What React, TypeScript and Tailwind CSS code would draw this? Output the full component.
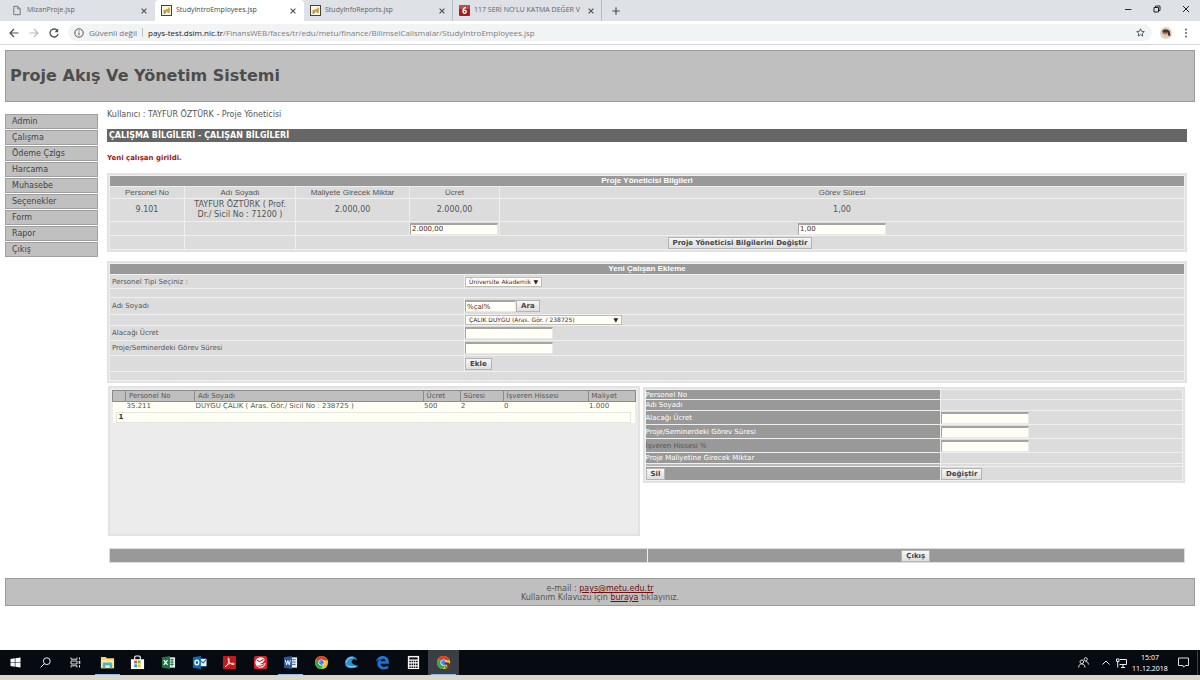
import { useState } from "react";
import type { ReactNode } from "react";

const menu = ["Admin", "Çalışma", "Ödeme Çzlgs", "Harcama", "Muhasebe", "Seçenekler", "Form", "Rapor", "Çıkış"];

const employees = [
  { no: "35.211", name: "DUYGU ÇALIK ( Aras. Gör./ Sicil No : 238725 )", fee: "500", duration: "2", share: "0", cost: "1.000" },
];

const cell = "bg-[#dcdcdc] p-0";
const field = "block h-[12px] w-[88px] border border-t-2 border-t-[#a4a4a4] border-l-[#a4a4a4] border-r-[#e8e8e8] border-b-[#e8e8e8] bg-[#fffff5] px-px text-[7px] leading-none text-[#5a2525] outline-none";
const panel = "w-full border-2 border-[#e2e2e2] bg-[#efefef] border-separate border-spacing-px";

function Btn({ children, onClick }: { children: ReactNode; onClick?: () => void }) {
  return (
    <button type="button" onClick={onClick}
      className="block h-[12px] border border-[#b4b4b4] bg-linear-to-b from-[#f6f6f6] to-[#dedede] px-1 text-[7px] leading-[10px] font-bold whitespace-nowrap text-[#444]">
      {children}
    </button>
  );
}

function Dropdown({ id, label, options, wide }: { id: string; label: string; options: string[]; wide?: boolean }) {
  return (
    <div className={wide ? "relative w-[157px]" : "relative w-[77px]"}>
      <select id={id} aria-label={label}
        className="block h-[10px] w-full appearance-none border border-[#c0bdb5] bg-[#fffff8] pl-[3px] text-[6px] leading-[8px] text-[#5a2020] outline-none">
        {options.map((o) => <option key={o}>{o}</option>)}
      </select>
      <span className="pointer-events-none absolute top-0 right-1 text-[6px] leading-[10px] text-[#401010]">▼</span>
    </div>
  );
}

/* ---- browser frame ---- */

function PageIcon() {
  return (
    <svg className="h-[11px] w-[11px]" viewBox="0 0 11 11" fill="none" stroke="#74777b">
      <path d="M1.800 1.300h4l2.400 2.400v6H1.800zM5.700 1.500v2.400h2.400" />
    </svg>
  );
}

function TomcatIcon() {
  return (
    <svg className="h-[11px] w-[11px]" viewBox="0 0 11 11">
      <rect x=".5" y=".5" width="10" height="10" fill="#fbf8e9" stroke="#44423c" />
      <path d="M2 8.500 3 5.500 5 4.200 7 3.800l.8-1.800 1.400 1.600L9 6.500 7.500 8 5.500 6.800 4 8.800z" fill="#d1a540" />
      <path d="M2.200 5.600 4.200 6.200M3.200 8.400l1.600-1M7.400 7.200l1.400 1" stroke="#7d683a" strokeWidth=".6" />
    </svg>
  );
}

function GazetteIcon() {
  return (
    <svg className="h-[11px] w-[11px]" viewBox="0 0 11 11">
      <rect width="11" height="11" rx="1" fill="#a81c20" />
      <rect width="11" height="4" rx="1" fill="#c4494b" />
      <path d="M7 2.600C5 2.400 4 4 4 6c0 1.600.6 2.400 1.600 2.400S7.200 7.600 7.200 6.600 6.600 5.200 5.700 5.200 4.200 6 4.200 6.600" fill="none" stroke="#fff" strokeWidth="1.300" />
    </svg>
  );
}

function CloseIcon() {
  return (
    <svg className="h-[6px] w-[6px]" viewBox="0 0 6 6" stroke="#4c4f53" strokeWidth="1.100">
      <path d="M.6.600 5.400 5.400M5.400.600.6 5.400" />
    </svg>
  );
}

const tabs = [
  { title: "MizanProje.jsp", icon: <PageIcon /> },
  { title: "StudyIntroEmployees.jsp", icon: <TomcatIcon /> },
  { title: "StudyInfoReports.jsp", icon: <TomcatIcon /> },
  { title: "117 SERİ NO'LU KATMA DEĞER V", icon: <GazetteIcon /> },
];

function Browser() {
  const [active, setActive] = useState(1);
  return (
    <header className="font-['Open_Sans','Noto_Sans',sans-serif] text-[8px] text-[#5f6368]">
      <div className="flex h-[21px] items-stretch bg-[#dee1e6] pl-[6px]">
        {tabs.map((t, i) => (
          <div key={t.title}
            className={`flex w-[149px] items-center border-r pr-[7px] pl-[6px] text-[7px] ${i === active ? "rounded-t-[4px] border-white bg-white text-[#45494d]" : i > active ? "border-[#b9bcc1]" : "border-transparent"}`}>
            <button type="button" onClick={() => setActive(i)} className="flex flex-1 items-center gap-1 text-left">
              <span className="shrink-0">{t.icon}</span>
              <span className="whitespace-nowrap">{t.title}</span>
            </button>
            <button type="button" aria-label="Kapat"><CloseIcon /></button>
          </div>
        ))}
        <button type="button" aria-label="Yeni sekme" className="px-[10px]">
          <svg className="h-[8px] w-[8px]" viewBox="0 0 8 8" stroke="#4c4f53" strokeWidth="1.200"><path d="M4 .3v7.400M.3 4h7.400" /></svg>
        </button>
        <div className="ml-auto flex h-[18px] items-center gap-[21px] pr-[10px]">
          <button type="button" aria-label="Küçült">
            <svg className="h-[8px] w-[8px]" viewBox="0 0 8 8" stroke="#333"><path d="M1 4.500h6.500" /></svg>
          </button>
          <button type="button" aria-label="Önceki boyut">
            <svg className="h-[8px] w-[8px]" viewBox="0 0 8 8" fill="none" stroke="#222"><path d="M1 2.500h4.500V7H1zM2.500 2.300V1H7v4.500H5.800" /></svg>
          </button>
          <button type="button" aria-label="Kapat">
            <svg className="h-[8px] w-[8px]" viewBox="0 0 8 8" stroke="#222"><path d="M1 1l6 6M7 1 1 7" /></svg>
          </button>
        </div>
      </div>
      <div className="flex h-[24px] items-center border-b border-[#d5d7da] bg-white pl-[9px]">
        <button type="button" aria-label="Geri">
          <svg className="h-[10px] w-[10px]" viewBox="0 0 10 10" fill="none" stroke="#4c4f53" strokeWidth="1.200"><path d="M9.500 5H1M5 1 1 5l4 4" /></svg>
        </button>
        <button type="button" aria-label="İleri" className="ml-[10px]">
          <svg className="h-[10px] w-[10px]" viewBox="0 0 10 10" fill="none" stroke="#b6b8bb" strokeWidth="1.100"><path d="M.5 5H9M5 1l4 4-4 4" /></svg>
        </button>
        <button type="button" aria-label="Yenile" className="ml-[10px]">
          <svg className="h-[10px] w-[10px]" viewBox="0 0 10 10" fill="none" stroke="#4c4f53" strokeWidth="1.300"><path d="M8.300 2.600A4 4 0 1 0 9 5.800" /><path d="M9.200.500v3.700H5.500z" fill="#4c4f53" stroke="none" /></svg>
        </button>
        <div className="ml-[9px] flex h-[17px] flex-1 items-center rounded-full bg-[#f1f3f4] pr-[7px] pl-[6px]">
          <svg className="h-[10px] w-[10px]" viewBox="0 0 10 10" fill="none" stroke="#55585c"><circle cx="5" cy="5" r="4.200" /><path d="M5 4.400v3M5 2.400v1.100" /></svg>
          <span className="ml-[5px] text-[#6d7175]">Güvenli değil</span>
          <span className="mx-[5px] h-[9px] w-px bg-[#bfc2c5]" />
          <span className="flex-1 text-[#7b7f83]">
            <span className="text-[#222]">pays-test.dsim.nic.tr</span>/FinansWEB/faces/tr/edu/metu/finance/BilimselCalismalar/StudyIntroEmployees.jsp
          </span>
          <svg className="h-[9px] w-[9px]" viewBox="0 0 10 10" fill="none" stroke="#4c4f53"><path d="m5 .9 1.200 2.800 3 .3-2.300 2 .7 3L5 7.400 2.400 9l.7-3-2.300-2 3-.3z" /></svg>
        </div>
        <svg className="ml-[8px] h-[12px] w-[12px]" viewBox="0 0 12 12">
          <circle cx="6" cy="6" r="6" fill="#ddd3c6" />
          <path d="M2 4.500C3 1.500 8 1.500 9.800 4.500L10.500 9 8 8.500 7.500 5.500 4 5z" fill="#4b3127" />
          <path d="M3 5.200h4.200L7.400 8 5.500 9.800 3.600 8z" fill="#e7b48c" /><path d="M2.600 5.400h4.600v1H2.600z" fill="#34241f" />
        </svg>
        <button type="button" aria-label="Menü" className="mr-[10px] ml-[10px]">
          <svg className="h-[10px] w-[8px]" viewBox="0 0 8 10" fill="#4c4f53"><circle cx="4" cy="1.500" r=".9" /><circle cx="4" cy="5" r=".9" /><circle cx="4" cy="8.500" r=".9" /></svg>
        </button>
      </div>
    </header>
  );
}

/* ---- page panels ---- */

function ManagerPanel() {
  return (
    <table className={`${panel} table-fixed text-center text-[8px] leading-[10px]`}>
      <colgroup>
        <col className="w-[74px]" /><col className="w-[110px]" /><col className="w-[113px]" /><col className="w-[89px]" /><col />
      </colgroup>
      <thead className="font-['Liberation_Sans',Arial,sans-serif]">
        <tr><th colSpan={5} className="h-[10px] bg-[#999] p-0 text-white">Proje Yöneticisi Bilgileri</th></tr>
        <tr>
          {["Personel No", "Adı Soyadı", "Maliyete Girecek Miktar", "Ücret", "Görev Süresi"].map((h) => (
            <th key={h} className="h-[11px] bg-[#dcdcdc] p-0 font-normal">{h}</th>
          ))}
        </tr>
      </thead>
      <tbody>
        <tr className="h-[22px]">
          <td className={cell}>9.101</td>
          <td className="bg-[#dcdcdc] px-1 py-0">TAYFUR ÖZTÜRK ( Prof. Dr./ Sicil No : 71200 )</td>
          <td className={cell}>2.000,00</td>
          <td className={cell}>2.000,00</td>
          <td className={cell}>1,00</td>
        </tr>
        <tr className="h-[13px]">
          <td className={cell} /><td className={cell} /><td className={cell} />
          <td className={cell}><input aria-label="Ücret" defaultValue="2.000,00" className={field} /></td>
          <td className={cell}><div className="flex justify-center"><input aria-label="Görev Süresi" defaultValue="1,00" className={field} /></div></td>
        </tr>
        <tr className="h-[13px]">
          <td className={cell} /><td className={cell} />
          <td colSpan={3} className={cell}><div className="flex justify-center"><Btn>Proje Yöneticisi Bilgilerini Değiştir</Btn></div></td>
        </tr>
      </tbody>
    </table>
  );
}

function NewEmployeePanel() {
  const label = "bg-[#dcdcdc] py-0 pr-0 pl-[2px]";
  return (
    <table className={`${panel} mt-[9px] table-fixed text-left text-[7px] leading-[8px]`}>
      <colgroup><col className="w-[33%]" /><col /></colgroup>
      <thead>
        <tr><th colSpan={2} className="h-[10px] bg-[#999] p-0 text-center font-['Liberation_Sans',Arial,sans-serif] text-[8px] text-white">Yeni Çalışan Ekleme</th></tr>
      </thead>
      <tbody>
        <tr className="h-[13px]">
          <td className={label}><label htmlFor="ptype">Personel Tipi Seçiniz :</label></td>
          <td className={cell}><Dropdown id="ptype" label="Personel Tipi" options={["Üniversite Akademik", "Üniversite İdari"]} /></td>
        </tr>
        <tr className="h-[8px]"><td colSpan={2} className={cell} /></tr>
        <tr className="h-[16px]">
          <td className={label}><label htmlFor="pname">Adı Soyadı</label></td>
          <td className={cell}>
            <div className="flex items-center">
              <input id="pname" defaultValue="%çal%" className={`${field} max-w-[51px]`} />
              <Btn>Ara</Btn>
            </div>
          </td>
        </tr>
        <tr className="h-[10px]">
          <td className={label} />
          <td className={cell}><Dropdown id="person" label="Çalışan" wide options={["ÇALIK DUYGU (Aras. Gör. / 238725)"]} /></td>
        </tr>
        <tr className="h-[14px]">
          <td className={label}><label htmlFor="pfee">Alacağı Ücret</label></td>
          <td className={cell}><input id="pfee" className={field} /></td>
        </tr>
        <tr className="h-[14px]">
          <td className={label}><label htmlFor="pdur">Proje/Seminerdeki Görev Süresi</label></td>
          <td className={cell}><input id="pdur" className={field} /></td>
        </tr>
        <tr className="h-[15px]"><td className={label} /><td className={cell}><Btn>Ekle</Btn></td></tr>
        <tr className="h-[8px]"><td colSpan={2} className={cell} /></tr>
      </tbody>
    </table>
  );
}

function EmployeeList() {
  return (
    <div className="h-[150px] border-2 border-[#e2e2e2] bg-[#ececec] p-[2px]">
      <table className="w-full table-fixed border-collapse text-left text-[7px] leading-[9px]">
        <colgroup>
          <col className="w-[13px]" /><col className="w-[69px]" /><col /><col className="w-[37px]" /><col className="w-[43px]" /><col className="w-[85px]" /><col className="w-[47px]" />
        </colgroup>
        <thead>
          <tr className="h-[11px]">
            {["", "Personel No", "Adı Soyadı", "Ücret", "Süresi", "İşveren Hissesi", "Maliyet"].map((h) => (
              <th key={h} className="border border-[#8c8c8c] bg-[#bfbfbf] py-0 pr-0 pl-[3px] font-normal whitespace-nowrap">{h}</th>
            ))}
          </tr>
        </thead>
        <tbody className="bg-[#fffff5]">
          {employees.map((e) => (
            <tr key={e.no} className="h-[10px]">
              <td className="p-0" />
              {[e.no, e.name, e.fee, e.duration, e.share, e.cost].map((v, i) => <td key={i} className="py-0 pr-0 pl-px">{v}</td>)}
            </tr>
          ))}
          <tr>
            <td colSpan={7} className="p-0">
              <div className="mr-1 ml-[3px] h-[11px] border border-[#e6e6dc] pl-[2px] font-bold text-[#333]">1</div>
            </td>
          </tr>
        </tbody>
      </table>
    </div>
  );
}

function EditPanel() {
  const head = "bg-[#999] p-0 text-left font-normal text-white";
  return (
    <table className={`${panel} mt-px table-fixed text-[7px] leading-[8px]`}>
      <colgroup><col className="w-[55%]" /><col /></colgroup>
      <tbody>
        <tr className="h-[9px]"><th className={head}>Personel No</th><td className={cell} /></tr>
        <tr className="h-[10px]"><th className={head}>Adı Soyadı</th><td className={cell} /></tr>
        <tr className="h-[13px]"><th className={head}><label htmlFor="efee">Alacağı Ücret</label></th><td className={cell}><input id="efee" className={field} /></td></tr>
        <tr className="h-[13px]"><th className={head}><label htmlFor="edur">Proje/Seminerdeki Görev Süresi</label></th><td className={cell}><input id="edur" className={field} /></td></tr>
        <tr className="h-[13px]"><th className="bg-[#999] p-0 text-left font-normal text-[#555]"><label htmlFor="eshare">İşveren Hissesi %</label></th><td className={cell}><input id="eshare" className={field} /></td></tr>
        <tr className="h-[10px]"><th className={head}>Proje Maliyetine Girecek Miktar</th><td className={cell} /></tr>
        <tr className="h-[2px]"><td className="bg-[#b8b8b8] p-0" /><td className={cell} /></tr>
        <tr className="h-[13px]"><td className="bg-[#999] p-0"><Btn>Sil</Btn></td><td className={cell}><Btn>Değiştir</Btn></td></tr>
      </tbody>
    </table>
  );
}

/* ---- taskbar ---- */

function ChromeLogo() {
  return (
    <>
      <circle cx="8" cy="8" r="7" fill="#fbc116" />
      <path d="M8 8 1.940 4.500A7 7 0 0 1 14.060 4.500L14.600 5.500H8z" fill="#e33b2e" />
      <path d="M1.940 4.500A7 7 0 0 0 7.400 14.980L10.800 9.300 8 8z" fill="#2da94f" />
      <circle cx="8" cy="8" r="3.300" fill="#fff" /><circle cx="8" cy="8" r="2.600" fill="#4285f4" />
    </>
  );
}

const apps: { name: string; open?: boolean; active?: boolean; icon: ReactNode }[] = [
  { name: "Dosya Gezgini", open: true, icon: <><path d="M1 2h5l1.500 1.500H15V14H1z" fill="#f5d36b" /><path d="M1 5h14v9H1z" fill="#fbe596" /><path d="M3 14V9.500Q3 8 4.500 8h7Q13 8 13 9.500V14h-2.500v-3h-5v3z" fill="#45b3d8" /></> },
  { name: "Mağaza", icon: <><path d="M5 5V2.500Q5 1 6.500 1h3Q11 1 11 2.500V5" fill="none" stroke="#fff" strokeWidth="1.200" /><path d="M1 4.500h14V15H1z" fill="#fff" /><path d="M4.500 6h3v3h-3z" fill="#e8502c" /><path d="M8.300 6h3v3h-3z" fill="#7db62a" /><path d="M4.500 10h3v3h-3z" fill="#27a1dc" /><path d="M8.300 10h3v3h-3z" fill="#f7b81b" /></> },
  { name: "Excel", icon: <><path d="M8 2.500h7v11H8z" fill="#e9f3ec" /><path d="M9.500 5h4M9.500 7.500h4M9.500 10h4M11.800 4v8" stroke="#20744a" /><path d="M1 2.500 9.500 1v14L1 13.500z" fill="#1f7246" /><path d="m3 5.500 4 5M7 5.500l-4 5" stroke="#fff" strokeWidth="1.300" /></> },
  { name: "Outlook", icon: <><path d="M8 4h7.500v8H8z" fill="#e6f1fb" /><path d="m9 6 3 2.500L15 5" fill="none" stroke="#0f6fc4" strokeWidth="1.200" /><path d="M1 2.500 9.500 1v14L1 13.500z" fill="#0a6cc0" /><ellipse cx="5.200" cy="8" rx="2" ry="2.500" fill="none" stroke="#fff" strokeWidth="1.400" /></> },
  { name: "Acrobat", icon: <><rect x="1" y="1" width="14" height="14" rx="1" fill="#c8171c" /><path d="M3.500 12.500C6 11.500 8 7 7.500 4c-.3-1.500-1.500-.5-1 .8C7.500 8.500 10 10.500 12.500 10.200c1-.3.500-1.400-.8-1.400C8.500 8.800 5 10 3.500 12.500z" fill="none" stroke="#fff" /></> },
  { name: "Antivirüs", icon: <><rect x="1" y="1" width="14" height="14" rx="2" fill="#d9222a" /><path d="M8 2.500a5.500 5.500 0 1 0 5.500 5.500C12 9.500 9 10.500 6.500 9.500 9.500 9 12 7 12.500 4.700 11.500 3.300 10 2.500 8 2.500z" fill="#fff" /><path d="M4.500 5.500C6 7.500 9 7 11 4.500M5 11.500c2.500 1 5 .2 7-1.500" fill="none" stroke="#d9222a" strokeWidth="1.200" /></> },
  { name: "Word", open: true, icon: <><path d="M8 2.500h7v11H8z" fill="#eaf0fa" /><path d="M9.500 5h4M9.500 7.500h4M9.500 10h4" stroke="#2b579a" /><path d="M1 2.500 9.500 1v14L1 13.500z" fill="#2b579a" /><path d="m2.600 5.500 1.200 5 1.400-4.500 1.400 4.500 1.200-5" fill="none" stroke="#fff" /></> },
  { name: "Chrome", icon: <ChromeLogo /> },
  { name: "Dalga", icon: <><path d="M1 9C1 4 5 1 9.500 1.500c3 .3 4.500 2.500 4 4.500-1-1.500-3-2-4.500-.8-2 1.700-.5 5.300 6.500 6.300-3 2.500-6 3-9 2.500S1 12 1 9z" fill="#2b8fd0" /><path d="M2.500 8C3 4.500 6 2.500 9.500 2.600M3.500 11c2 1.800 6 2 9 1" fill="none" stroke="#a9dcf5" /></> },
  { name: "Edge", icon: <path d="M1 7.500C1.500 3.500 4.500 1 8.200 1c4 0 6.600 2.700 6.600 6.500v1.700H5.800c.2 2.200 2 3.300 4.200 3.300 1.600 0 3-.4 4.200-1.100v2.800c-1.300.7-2.900 1-4.700 1-4 0-6.900-2.300-6.900-6 0-2.200 1.200-4 3.200-5C3.700 4.700 2 6 1 7.500zM5.900 6.600h5.200c0-1.700-.9-2.700-2.500-2.700S6 5.100 5.900 6.600z" fill="#1478d4" /> },
  { name: "Hesap Makinesi", icon: <><path d="M2 1h12v14H2z" fill="#fff" /><path d="M3.500 2.500h9v2.300h-9z" fill="#111" /><path d="M3.500 7h9M3.500 10h9M3.500 13h9" stroke="#111" strokeWidth="1.700" strokeDasharray="1.700 .7" /></> },
  { name: "Chrome - Proje", open: true, active: true, icon: <><ChromeLogo /><path d="M9 9c1-2 5-2 6 1v5h-2l-1-2-2 1z" fill="#5a3b2a" /><path d="M9.500 10.500h2.500v2h-2z" fill="#e3ae87" /></> },
];

function Taskbar() {
  return (
    <footer>
      <div className="flex h-[25px] items-stretch bg-[#060b12] text-white">
        <div className="grid w-[92px] grid-cols-3 pr-[2px]">
          <button type="button" aria-label="Başlat" className="flex items-center justify-center">
            <svg className="h-[11px] w-[11px]" viewBox="0 0 11 11" fill="#fff"><path d="M.5 2 4.800 1.300V5.200H.5zM5.400 1.200 10.500.5v4.700H5.400zM.5 5.800h4.300v3.900L.5 9zM5.400 5.800h5.100v4.700l-5.100-.7z" /></svg>
          </button>
          <button type="button" aria-label="Ara" className="flex items-center justify-center">
            <svg className="h-[11px] w-[11px]" viewBox="0 0 11 11" fill="none" stroke="#eee"><circle cx="6.800" cy="4.200" r="3.400" /><path d="M4.300 6.700.600 10.400" /></svg>
          </button>
          <button type="button" aria-label="Görev Görünümü" className="flex items-center justify-center">
            <svg className="h-[11px] w-[11px]" viewBox="0 0 11 11" fill="none" stroke="#ddd"><path d="M1 .500v1.700h6V.5M1 4h6v3H1zM1 10.500V8.800h6v1.700M9.500.5v2M9.500 8v2.500" /><path d="M8.700 3.800h1.600v3H8.700z" fill="#ddd" stroke="none" /></svg>
          </button>
        </div>
        <div className="grid w-[367px] grid-cols-12">
          {apps.map((a) => (
            <button key={a.name} type="button" aria-label={a.name}
              className={`flex items-center justify-center ${a.active ? "bg-[#3a3f45]" : ""}`}>
              <span className={`flex h-full items-center px-[5px] ${a.open ? "border-y border-t-transparent border-b-[#8fbbe6]" : ""}`}>
                <svg className="h-[15px] w-[15px]" viewBox="0 0 16 16">{a.icon}</svg>
              </span>
            </button>
          ))}
        </div>
        <div className="ml-auto flex items-center pr-[8px]">
          <svg className="h-[11px] w-[11px]" viewBox="0 0 11 11" fill="none" stroke="#ddd"><circle cx="3.800" cy="4.800" r="1.800" /><path d="M.6 10.500c.2-2.500 1.200-3.500 3.200-3.500s3 1 3.200 3.500" /><circle cx="7.700" cy="2.300" r="1.600" /><path d="M7.500 4.500c1.800 0 2.800 1 3 3" /></svg>
          <svg className="ml-[13px] h-[5px] w-[8px]" viewBox="0 0 8 5" fill="none" stroke="#eee"><path d="m.5 4.500 3.500-3.500 3.500 3.500" /></svg>
          <svg className="ml-[6px] h-[10px] w-[11px]" viewBox="0 0 11 10" fill="none" stroke="#eee"><path d="M4 1.500h6.500v5H3.500M5 9.500h4M7 6.500v3M.5 1h2.500v2.500H.5zM1.700 3.500v6" /></svg>
          <div className="ml-[5px] w-[36px] text-center font-['Noto_Sans',sans-serif] text-[7px] leading-[11px]">
            <div>15:07</div>
            <div>11.12.2018</div>
          </div>
          <svg className="ml-[10px] h-[11px] w-[11px]" viewBox="0 0 11 11" fill="none" stroke="#ddd"><path d="M.5 1h10v7.500H7.200L5.500 10.200 5 8.500H.5z" /></svg>
        </div>
        <div className="mr-[2px] w-px bg-[#3c4147]" />
      </div>
      <div className="h-[5px] bg-[#d9d7c9]" />
    </footer>
  );
}

export default function App() {
  return (
    <div className="flex min-h-screen flex-col bg-white font-['DejaVu_Sans',Verdana,sans-serif] text-[#555]">
      <Browser />
      <main className="flex-1 px-[5px] pt-[5px]">
        <div className="flex h-[52px] items-center border border-[#9a9a9a] bg-[#bfbfbf] px-1">
          <h1 className="text-[16px] font-bold text-[#4d4d4d]">Proje Akış Ve Yönetim Sistemi</h1>
        </div>
        <div className="flex gap-[9px] pt-[7px] pr-2">
          <nav className="flex w-[93px] shrink-0 flex-col gap-px pt-[5px]">
            {menu.map((m) => (
              <a key={m} href="#" className="block border border-[#9f9f9f] bg-[#c0c0c0] pl-[6px] text-[8px] leading-[13px] text-[#444]">{m}</a>
            ))}
          </nav>
          <div className="min-w-0 flex-1">
            <p className="text-[8px] leading-[12px]">Kullanıcı : TAYFUR ÖZTÜRK - Proje Yöneticisi</p>
            <h2 className="mt-[8px] bg-[#666] pl-[2px] text-[8px] leading-[13px] font-bold text-white">ÇALIŞMA BİLGİLERİ - ÇALIŞAN BİLGİLERİ</h2>
            <p className="mt-[11px] mb-[10px] text-[7px] leading-[10px] font-bold text-[#a01515]">Yeni çalışan girildi.</p>
            <ManagerPanel />
            <NewEmployeePanel />
            <div className="mt-[3px] grid grid-cols-[49fr_50fr] items-start gap-[3px] pr-[2px] pl-px">
              <EmployeeList />
              <EditPanel />
            </div>
            <div className="mx-[2px] mt-[12px] grid h-[15px] grid-cols-2 gap-px border border-[#ddd] bg-[#eee]">
              <div className="bg-[#999]" />
              <div className="flex items-center justify-center bg-[#999]"><Btn>Çıkış</Btn></div>
            </div>
          </div>
        </div>
        <div className="mt-[15px] border border-[#9a9a9a] bg-[#bfbfbf] pt-[5px] pb-[3px] text-center text-[8px] leading-[9px]">
          <p>e-mail : <a href="mailto:pays@metu.edu.tr" className="text-[#701010] underline">pays@metu.edu.tr</a></p>
          <p>Kullanım Kılavuzu için <a href="#" className="text-[#701010] underline">buraya</a> tıklayınız.</p>
        </div>
      </main>
      <Taskbar />
    </div>
  );
}
